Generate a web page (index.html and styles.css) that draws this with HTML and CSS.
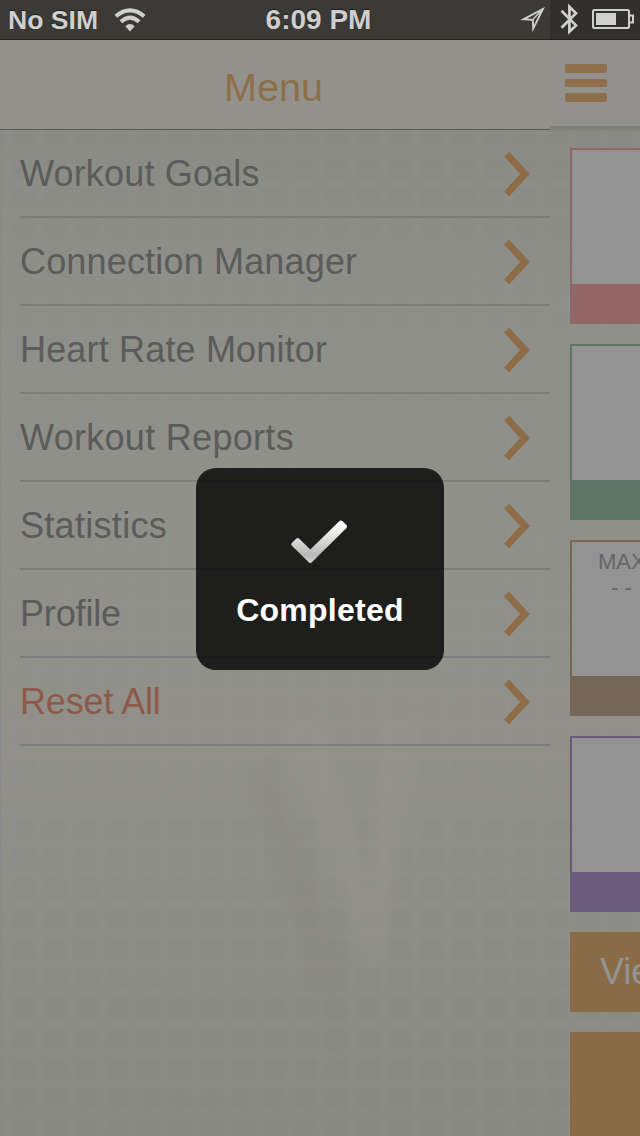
FILE: index.html
```html
<!DOCTYPE html>
<html lang="en">
<head>
<meta charset="utf-8">
<title>Menu</title>
<link rel="stylesheet" href="styles.css">
</head>
<body>
<div class="screen">
  <svg class="backdrop" width="640" height="1136" viewBox="0 0 640 1136" aria-hidden="true">
    <defs>
      <pattern id="cells" x="8" y="4" width="31.4" height="30" patternUnits="userSpaceOnUse">
        <rect x="4" y="4" width="23" height="22" rx="5" fill="#868782"/>
      </pattern>
      <linearGradient id="fade" x1="0" y1="0" x2="0" y2="1">
        <stop offset="0" stop-color="#fff" stop-opacity=".4"/>
        <stop offset=".25" stop-color="#fff" stop-opacity=".05"/>
        <stop offset=".66" stop-color="#fff" stop-opacity=".05"/>
        <stop offset="1" stop-color="#fff" stop-opacity=".35"/>
      </linearGradient>
      <linearGradient id="shade" x1="0" y1="0" x2="0" y2="1">
        <stop offset="0" stop-color="#898a84"/>
        <stop offset=".3" stop-color="#8f9089"/>
        <stop offset=".65" stop-color="#91918a"/>
        <stop offset="1" stop-color="#8b8b85"/>
      </linearGradient>
      <mask id="fadeMask"><rect width="640" height="1136" fill="url(#fade)"/></mask>
      <filter id="soft"><feGaussianBlur stdDeviation="7"/></filter>
    </defs>
    <rect width="640" height="1136" fill="url(#shade)"/>
    <rect width="640" height="1136" fill="url(#cells)" mask="url(#fadeMask)"/>
    <path d="M280 720L365 965L382 965L420 720L380 720L368 890L325 720Z" fill="#95948d" opacity=".45" filter="url(#soft)"/>
    <path d="M270 760L340 960L335 1060L310 960L250 780Z" fill="#888780" opacity=".35" filter="url(#soft)"/>
  </svg>

  <header class="status">
    <div class="status-left">
      <span class="carrier">No SIM</span>
      <svg width="32" height="24" viewBox="0 0 32 24">
        <g fill="none" stroke="#cfcfcd" stroke-width="4">
          <path d="M1.8 8.3Q16 -3.6 30.2 8.3"/>
          <path d="M6.9 13.8Q16 5.6 25.1 13.8"/>
        </g>
        <path d="M11.4 18.2Q16 14 20.6 18.2L16 23.4Z" fill="#cfcfcd"/>
      </svg>
    </div>
    <span class="clock">6:09 PM</span>
    <svg class="status-icons" width="120" height="40" viewBox="520 0 120 40">
      <rect x="550" width="90" height="39" fill="#31302e"/>
      <path d="M542.8 9.2L523.5 19.2L532.8 19.9L533.2 28.6Z" fill="none" stroke="#cfcfcd" stroke-width="1.9"/>
      <path d="M532.8 19.6L542.8 9" stroke="#cfcfcd" stroke-width="1.4"/>
      <path d="M561.5 10.8L576 25.4L569.4 31.6V6.8L576 13.2L561.5 27.8" fill="none" stroke="#cfcfcd" stroke-width="2.7"/>
      <rect x="593" y="10" width="36" height="18" rx="1.5" fill="none" stroke="#cfcfcd" stroke-width="2"/>
      <rect x="596" y="13" width="20" height="12" fill="#cfcfcd"/>
      <path d="M630 15.5H633V22.5H630" fill="none" stroke="#cfcfcd" stroke-width="2"/>
    </svg>
  </header>

  <div class="body">
    <nav class="drawer">
      <h1 class="title">Menu</h1>
      <ul class="list">
        <li class="row">Workout Goals<svg class="chevron" viewBox="0 0 28 46"><path d="M3.6 3L22 23L3.6 43"/></svg></li>
        <li class="row">Connection Manager<svg class="chevron" viewBox="0 0 28 46"><path d="M3.6 3L22 23L3.6 43"/></svg></li>
        <li class="row">Heart Rate Monitor<svg class="chevron" viewBox="0 0 28 46"><path d="M3.6 3L22 23L3.6 43"/></svg></li>
        <li class="row wide">Workout Reports<svg class="chevron" viewBox="0 0 28 46"><path d="M3.6 3L22 23L3.6 43"/></svg></li>
        <li class="row wide">Statistics<svg class="chevron" viewBox="0 0 28 46"><path d="M3.6 3L22 23L3.6 43"/></svg></li>
        <li class="row tight">Profile<svg class="chevron" viewBox="0 0 28 46"><path d="M3.6 3L22 23L3.6 43"/></svg></li>
        <li class="row tight danger">Reset All<svg class="chevron" viewBox="0 0 28 46"><path d="M3.6 3L22 23L3.6 43"/></svg></li>
      </ul>
    </nav>

    <main class="page">
      <div class="page-head">
        <div class="burger"><i></i><i></i><i></i></div>
      </div>
      <div class="cards">
        <section class="card red"></section>
        <section class="card green"></section>
        <section class="card brown"><span class="label">MAX</span><span class="value">- -</span></section>
        <section class="card purple"></section>
        <div class="button">View</div>
        <div class="button tall"></div>
      </div>
    </main>
  </div>

  <div class="toast">
    <svg class="tick" width="60" height="46" viewBox="0 0 60 46">
      <defs>
        <linearGradient id="tick" x1="0" y1="0" x2="0" y2="1">
          <stop offset=".1" stop-color="#fff"/>
          <stop offset=".8" stop-color="#b9b9b9"/>
          <stop offset="1" stop-color="#d0d0d0"/>
        </linearGradient>
      </defs>
      <path d="M2.6 24.2L7.4 19.5Q8.7 18.4 10 19.6L21.3 30.4L50.5 2Q52 .8 53.4 2L57.6 6.3Q58.7 7.6 57.5 8.9L22.6 43.4Q21.3 44.6 20 43.4L2.7 26.5Q1.7 25.3 2.6 24.2Z" fill="url(#tick)"/>
    </svg>
    <span class="toast-text">Completed</span>
  </div>
</div>
</body>
</html>
```
FILE: styles.css
```css
* { box-sizing: border-box; }

body {
  margin: 0;
  font-family: "Liberation Sans", Arial, sans-serif;
}

.screen {
  position: relative;
  display: flex;
  flex-direction: column;
  width: 640px;
  height: 1136px;
  overflow: hidden;
  background: #8e8f88;
}

.backdrop {
  position: absolute;
  top: 0;
  left: 0;
}

.status {
  position: relative;
  display: grid;
  grid-template-columns: 1fr auto 1fr;
  flex: none;
  height: 40px;
  background: #3b3a37;
  border-bottom: 1px solid #232321;
  color: #cfcfcd;
  font-weight: bold;
  line-height: 39px;
  text-shadow: 0 -1px 1px #1d1d1c;
}

.status-left {
  display: flex;
  align-items: center;
  gap: 16px;
  padding-left: 8px;
}

.carrier {
  font-size: 26.6px;
  line-height: 40px;
}

.clock {
  padding-right: 3px;
  font-size: 28px;
}

.status-icons { justify-self: end; }

.body {
  position: relative;
  display: flex;
  flex: 1;
  min-height: 0;
}

.drawer {
  width: 550px;
  flex: none;
  border-left: 1px solid #88898a;
}

.title {
  height: 90px;
  margin: 0 0 0 -1px;
  padding-right: 3px;
  background: #92918c;
  border-bottom: 1px solid #555555;
  color: #8f6e4a;
  font-size: 39.6px;
  font-weight: normal;
  line-height: 95px;
  text-align: center;
}

.list {
  margin: 0;
  padding: 0 0 0 19px;
  list-style: none;
}

.row {
  display: flex;
  align-items: center;
  justify-content: space-between;
  height: 88px;
  padding-top: 2px;
  padding-right: 19px;
  border-bottom: 2px solid #7d7d7c;
  color: #5b5b5a;
  font-size: 36px;
  letter-spacing: 0.17px;
  line-height: 86px;
}

.wide { letter-spacing: 0.3px; }

.tight { letter-spacing: -0.15px; }

.danger { color: #8d5a4a; }

.chevron {
  width: 28px;
  height: 46px;
  fill: none;
  stroke: #8e6c47;
  stroke-width: 7;
}

.page {
  display: flex;
  flex-direction: column;
  width: 90px;
  overflow: hidden;
}

.page-head {
  flex: none;
  height: 86px;
  padding: 24px 0 0 15px;
  background: #92918e;
  box-shadow: 0 2px 4px 1px #797978;
}

.burger {
  display: flex;
  flex-direction: column;
  gap: 6px;
  width: 42px;
}

.burger i {
  height: 8.7px;
  background: #8f6e4b;
  border-radius: 2px;
}

.cards {
  display: flex;
  flex-direction: column;
  gap: 20px;
  padding: 22px 0 0 20px;
}

.card {
  display: flex;
  flex: none;
  flex-direction: column;
  width: 280px;
  height: 176px;
  padding: 7px 0 0 26px;
  background: #939393;
  border: 2px solid;
  border-bottom-width: 40px;
  color: #666666;
  font-size: 22px;
}

.red { border-color: #926567; }
.green { border-color: #5e7566; }
.brown { border-color: #7b6650 #756756 #756756 #7b6650; }
.purple { border-color: #6a5a7c; }

.label { line-height: 25px; }

.value {
  padding-left: 13px;
  line-height: 28px;
}

.button {
  flex: none;
  width: 280px;
  height: 80px;
  padding-left: 30px;
  background: #896b48;
  color: #949494;
  font-size: 36px;
  line-height: 80px;
}

.tall { height: 110px; }

.toast {
  position: absolute;
  top: 468px;
  left: 196px;
  display: flex;
  flex-direction: column;
  align-items: center;
  width: 248px;
  height: 202px;
  padding-top: 51px;
  background: rgba(0, 0, 0, 0.79);
  border-radius: 20px;
}

.tick { margin-right: 2px; }

.toast-text {
  margin-top: 27px;
  color: #ffffff;
  font-size: 32px;
  font-weight: bold;
  letter-spacing: 0.25px;
  line-height: 36px;
}
```
